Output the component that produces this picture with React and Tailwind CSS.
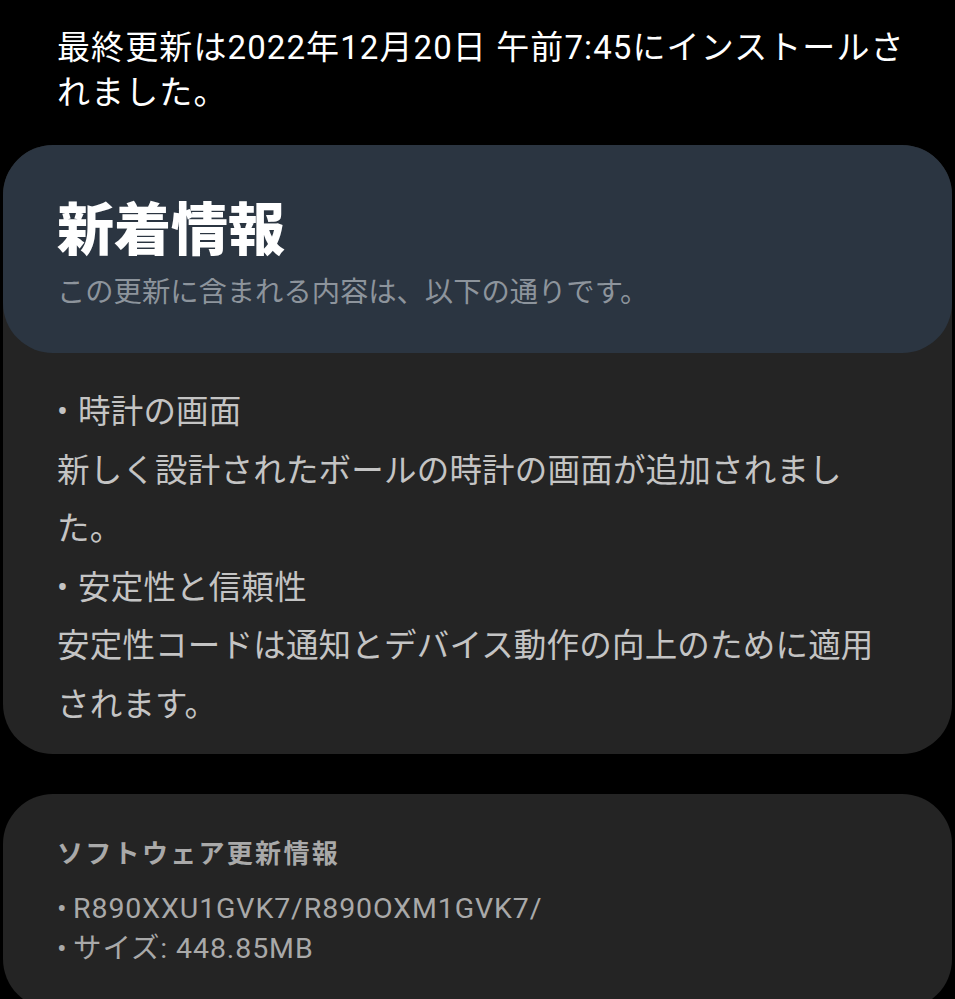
export default function App() {
  const font = { fontFamily: '"Roboto", "Noto Sans CJK JP", sans-serif' };
  const Bullet = ({ w = 21 }) => (
    <span className="inline-block tracking-normal" style={{ width: w }}>•</span>
  );
  return (
    <div className="w-[955px] h-[999px] overflow-hidden bg-black" style={font}>
      <div className="px-[57px] pt-[25px] text-[33px] leading-[45px] tracking-[1.1px] text-white whitespace-nowrap">
        最終更新は2022年12月20日 午前7:45にインストールさ
        <br />
        れました。
      </div>

      <div className="mx-[3px] mt-[30px] rounded-[50px] bg-[#242424]">
        <div className="rounded-[50px] bg-[#2b3541] px-[54px] pt-[54px] pb-[40px]">
          <div className="text-[57px] font-black leading-[64px] text-white">新着情報</div>
          <div className="mt-[10px] text-[28.3px] leading-[40px] text-[#8d949c] whitespace-nowrap">
            この更新に含まれる内容は、以下の通りです。
          </div>
        </div>
        <div className="px-[54px] pt-[30px] pb-[20px] text-[32.5px] leading-[58.5px] tracking-[0.2px] text-[#c4c4c4] whitespace-nowrap">
          <div><Bullet />時計の画面</div>
          <div>新しく設計されたボールの時計の画面が追加されまし</div>
          <div>た。</div>
          <div><Bullet />安定性と信頼性</div>
          <div>安定性コードは通知とデバイス動作の向上のために適用</div>
          <div>されます。</div>
        </div>
      </div>

      <div className="mx-[3px] mt-[40px] rounded-[50px] bg-[#242424] px-[54px] pt-[40px] pb-[40px] text-[#a9a9a9]">
        <div className="text-[26px] font-bold leading-[40px] tracking-[2.3px]">ソフトウェア更新情報</div>
        <div className="mt-[15px] text-[28.5px] leading-[40px] tracking-[0.9px] whitespace-nowrap">
          <div><Bullet w={16} />R890XXU1GVK7/R890OXM1GVK7/</div>
          <div><Bullet w={16} />サイズ: 448.85MB</div>
        </div>
      </div>
    </div>
  );
}
